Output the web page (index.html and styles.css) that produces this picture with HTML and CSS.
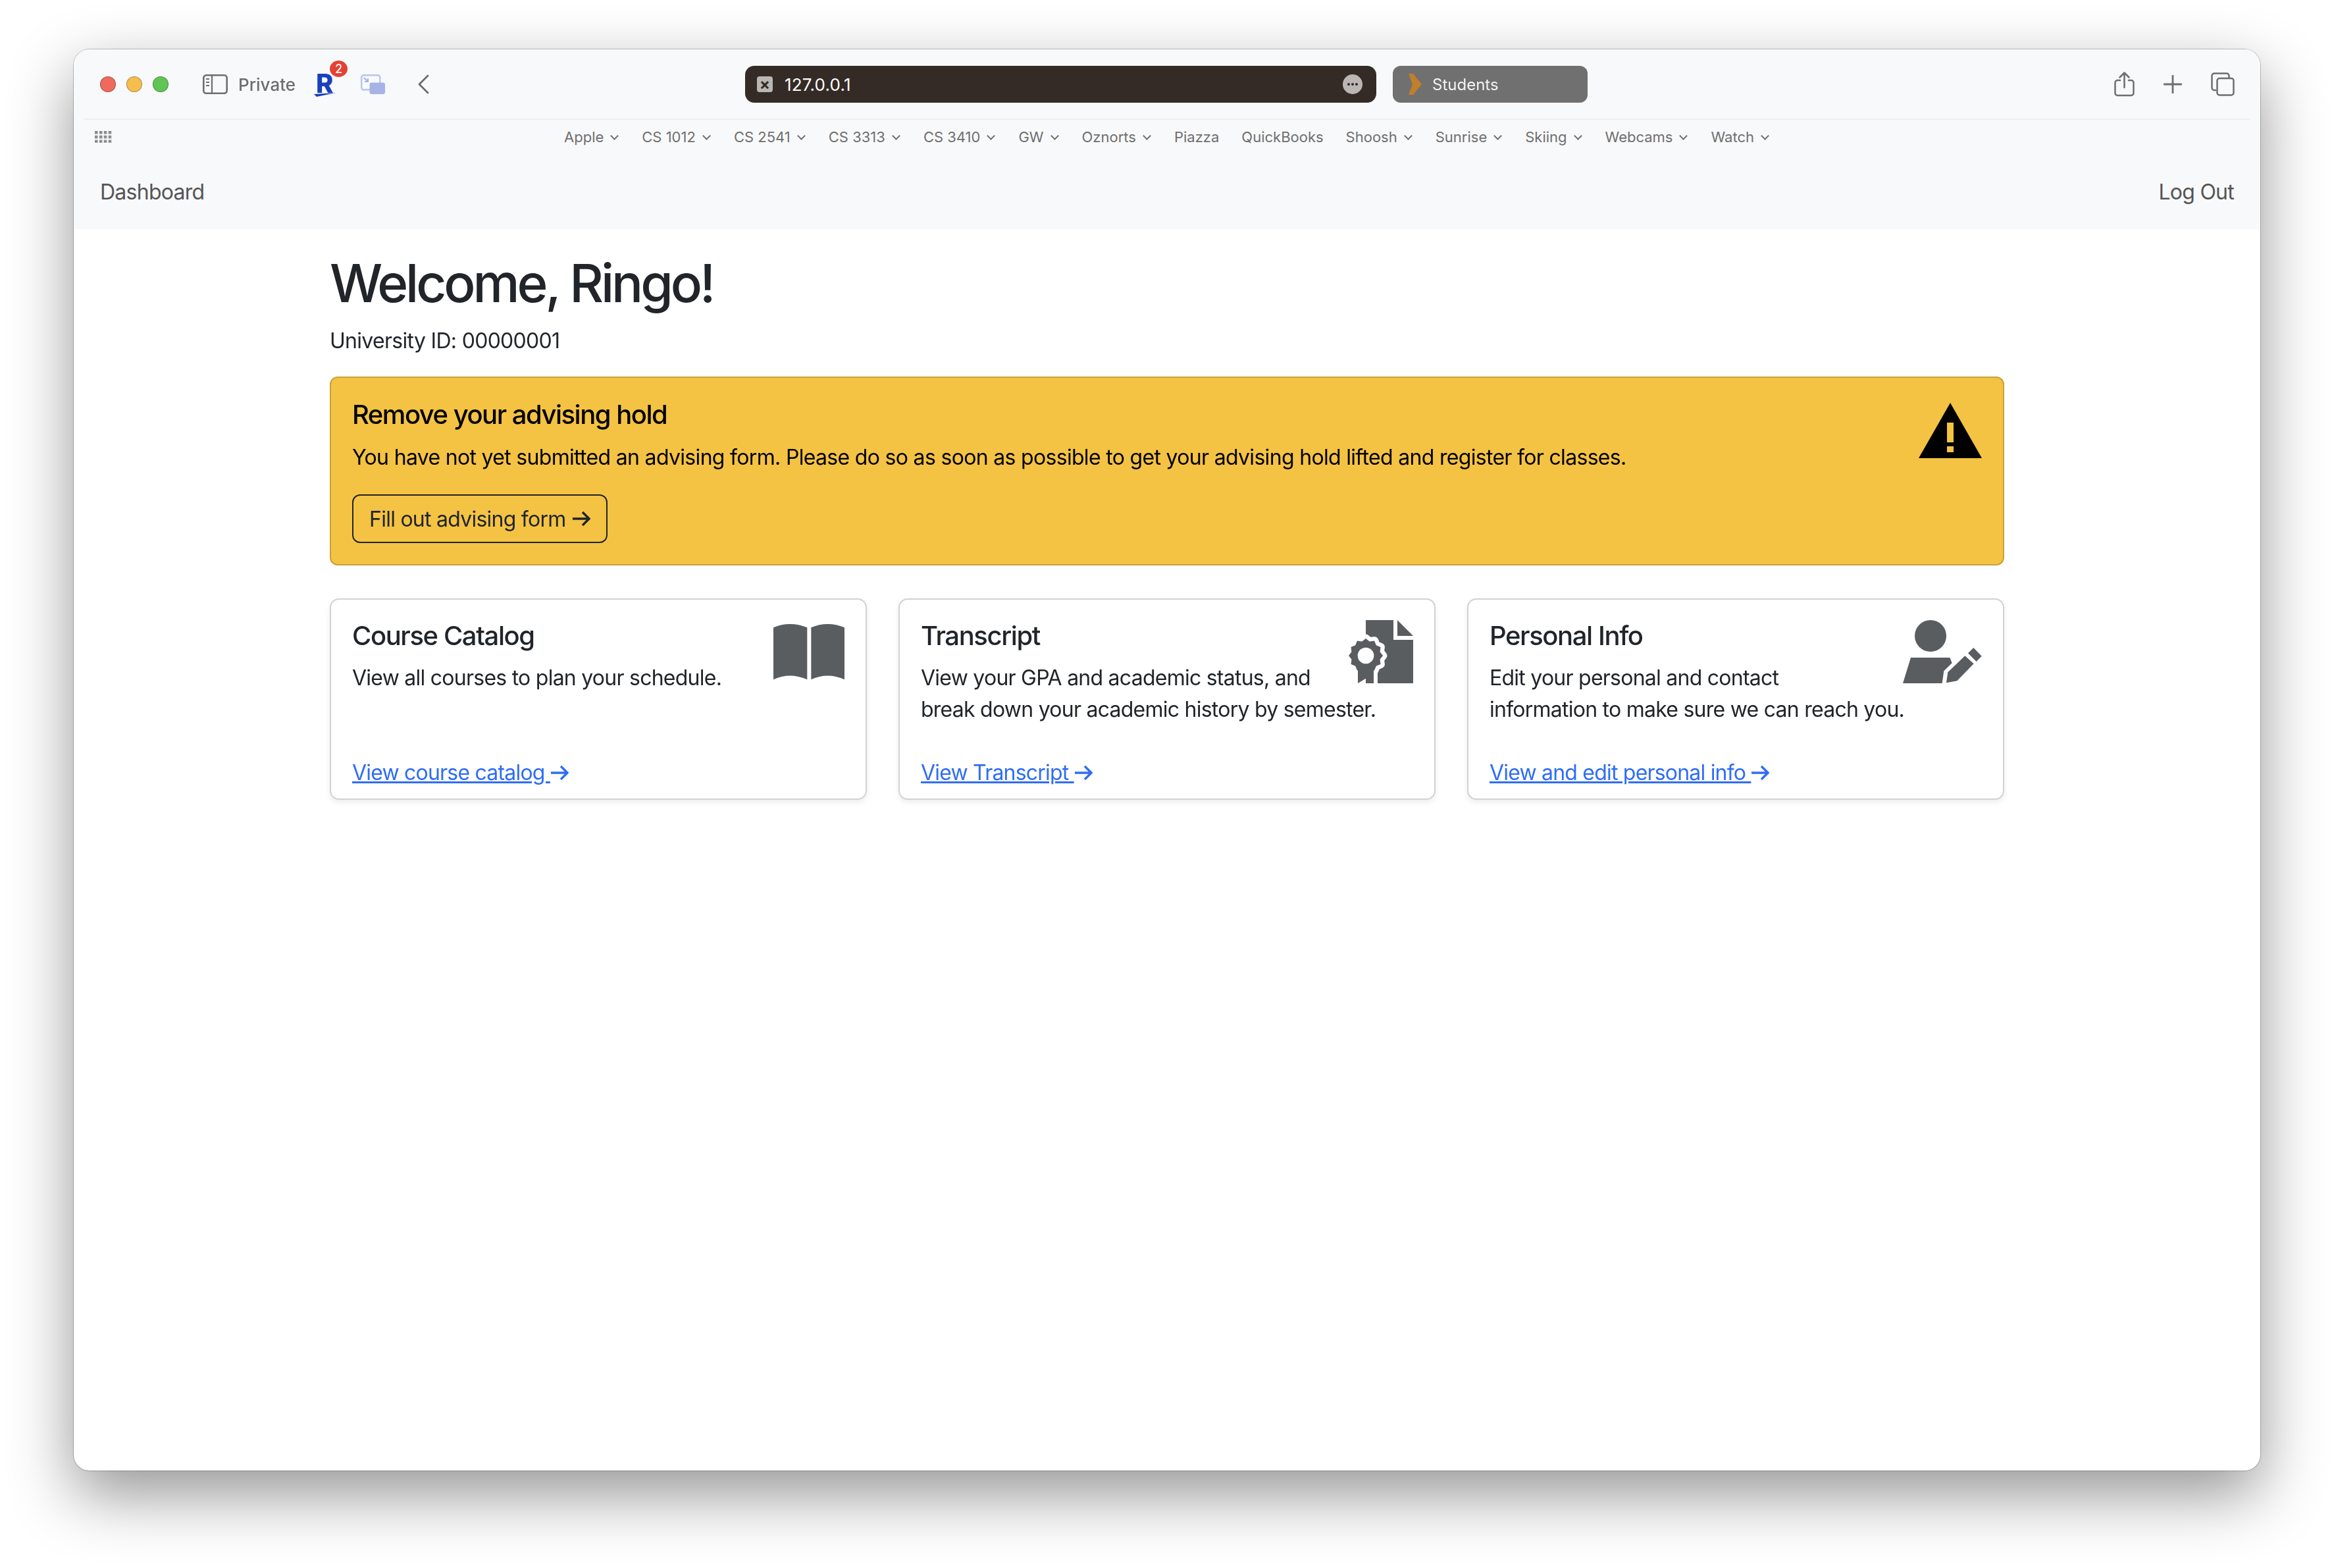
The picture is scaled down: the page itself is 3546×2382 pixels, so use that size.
FILE: index.html
```html
<!DOCTYPE html>
<html lang="en">
<head>
<meta charset="utf-8">
<title>Dashboard</title>
<link rel="stylesheet" href="styles.css">
</head>
<body>
<div class="window">
  <div class="toolbar">
    <div class="tb-left">
      <span class="light red"></span><span class="light yellow"></span><span class="light green"></span>
      <svg class="ic-sidebar" width="38" height="30" viewBox="0 0 38 30"><rect x="1.3" y="1.3" width="35.4" height="27.4" rx="4" fill="none" stroke="#6e6e6e" stroke-width="2.6"/><path d="M14 1v28M5 7h5M5 12h5M5 17h5" stroke="#6e6e6e" stroke-width="2.2" fill="none"/></svg>
      <span class="private">Private</span>
      <span class="rakuten">
        <span class="rakuten-r">R</span>
        <svg class="rakuten-swoosh" width="33" height="6" viewBox="0 0 33 6"><path d="M0 2 33 0 4 6z" fill="#1a3fbf"/></svg>
        <span class="badge">2</span>
      </span>
      <svg class="ic-pip" width="37" height="30" viewBox="0 0 37 30"><rect x="1.2" y="1.2" width="28" height="22" rx="3" fill="none" stroke="#b9c5ec" stroke-width="2.4"/><rect x="13.5" y="12.5" width="23.5" height="17.5" rx="3" fill="#a5b3e6"/><path d="M5 5l6 6M11 6v5H6" stroke="#a5b3e6" stroke-width="2" fill="none"/></svg>
      <svg class="ic-back" width="18" height="30" viewBox="0 0 18 30"><path d="M16 2 3 15l13 13" fill="none" stroke="#6b6b6b" stroke-width="2.8" stroke-linecap="round" stroke-linejoin="round"/></svg>
    </div>
    <div class="urlbar">
      <span class="favicon">×</span>
      <span class="url">127.0.0.1</span>
      <span class="more"><i></i><i></i><i></i></span>
    </div>
    <div class="tab">
      <svg width="20" height="32" viewBox="0 0 20 32"><path d="M0 0h7l13 16L7 32H0l6-16z" fill="#c17f2c"/></svg>
      <span>Students</span>
    </div>
    <div class="tb-right">
      <svg width="31" height="38" viewBox="0 0 31 38"><path d="M9 13H5a3.500 3.500 0 0 0-3.500 3.500v16A3.500 3.500 0 0 0 5 36h21a3.500 3.500 0 0 0 3.500-3.500v-16A3.500 3.500 0 0 0 26 13h-4M15.500 24V2M8.500 8.500l7-7 7 7" fill="none" stroke="#6e6e6e" stroke-width="2.500" stroke-linecap="round" stroke-linejoin="round"/></svg>
      <svg width="28" height="28" viewBox="0 0 28 28"><path d="M1 14h26M14 1v26" fill="none" stroke="#6e6e6e" stroke-width="2.800" stroke-linecap="round"/></svg>
      <svg width="36" height="36" viewBox="0 0 36 36"><path d="M8 27H5a3.500 3.500 0 0 1-3.500-3.500V5A3.500 3.500 0 0 1 5 1.500h19A3.500 3.500 0 0 1 27.500 5v3" fill="none" stroke="#6e6e6e" stroke-width="2.500"/><rect x="9.500" y="9" width="25" height="25.500" rx="3.500" fill="none" stroke="#6e6e6e" stroke-width="2.500"/></svg>
    </div>
  </div>

  <div class="bookmarks">
    <svg class="ic-grid" width="26" height="18" viewBox="0 0 26 18"><defs><pattern id="dots" width="6.900" height="6.800" patternUnits="userSpaceOnUse"><rect width="4.500" height="4.500" fill="#8a8a8a"/></pattern></defs><rect width="26" height="18" fill="url(#dots)"/></svg>
    <div class="bm-list">
      <span class="bm">Apple<i class="chev"></i></span>
      <span class="bm">CS 1012<i class="chev"></i></span>
      <span class="bm">CS 2541<i class="chev"></i></span>
      <span class="bm">CS 3313<i class="chev"></i></span>
      <span class="bm">CS 3410<i class="chev"></i></span>
      <span class="bm">GW<i class="chev"></i></span>
      <span class="bm">Oznorts<i class="chev"></i></span>
      <span class="bm">Piazza</span>
      <span class="bm">QuickBooks</span>
      <span class="bm">Shoosh<i class="chev"></i></span>
      <span class="bm">Sunrise<i class="chev"></i></span>
      <span class="bm">Skiing<i class="chev"></i></span>
      <span class="bm">Webcams<i class="chev"></i></span>
      <span class="bm">Watch<i class="chev"></i></span>
    </div>
  </div>

  <nav class="navbar">
    <a class="nav-link">Dashboard</a>
    <a class="nav-link">Log Out</a>
  </nav>

  <main class="main">
    <h1 class="welcome">Welcome, Ringo!</h1>
    <p class="uid">University ID: 00000001</p>

    <section class="alert">
      <svg class="ic-warn" width="96" height="84" viewBox="0 0 96 84"><path fill-rule="evenodd" d="M48 0 96 84H0zM43 30v30h10V30zM43 66v9h10v-9z" fill="#000"/></svg>
      <h2 class="alert-title">Remove your advising hold</h2>
      <p class="alert-text">You have not yet submitted an advising form. Please do so as soon as possible to get your advising hold lifted and register for classes.</p>
      <a class="btn">Fill out advising form
        <svg width="28" height="24" viewBox="0 0 28 24"><path d="M1 12h25M16 2l10 10-10 10" fill="none" stroke="#212529" stroke-width="3.400"/></svg>
      </a>
    </section>

    <div class="cards">
      <article class="card">
        <svg class="card-icon" width="108" height="96" viewBox="165 126 324 288"><path d="M165 160Q240 128 319 160V397Q240 362 165 397zM337 160Q412 128 490 160V397Q412 362 337 397z" fill="#5a5d60"/></svg>
        <h3 class="card-title">Course Catalog</h3>
        <p class="card-text">View all courses to plan your schedule.</p>
        <a class="card-link"><span class="u">View course catalog </span><svg width="28" height="24" viewBox="0 0 28 24"><path d="M1 12h25M16 2l10 10-10 10" fill="none" stroke="#2f6df6" stroke-width="3.400"/></svg></a>
      </article>
      <article class="card">
        <svg class="card-icon" width="98" height="96" viewBox="87 126 294 288"><path d="M165 126H291V216H381V414H165z" fill="#5a5d60"/><path d="M309 126 381 198H309z" fill="#5a5d60"/><rect x="201" y="330" width="18" height="84" fill="#fff"/><path d="M243 288 229.700 305.400 232.500 327 212.400 335.400 204 355.500 182.400 352.700 165 366 147.600 352.700 126 355.500 117.600 335.400 97.500 327 100.300 305.400 87 288 100.300 270.600 97.500 249 117.600 240.600 126 220.500 147.600 223.300 165 210 182.400 223.300 204 220.500 212.400 240.600 232.500 249 229.700 270.600z" fill="#5a5d60" stroke="#fff" stroke-width="38" paint-order="stroke" stroke-linejoin="round"/><path d="M129 340H201V414L165 392 129 414z" fill="#5a5d60"/><circle cx="165" cy="288" r="37" fill="#fff"/></svg>
        <h3 class="card-title">Transcript</h3>
        <p class="card-text">View your GPA and academic status, and break down your academic history by semester.</p>
        <a class="card-link"><span class="u">View Transcript </span><svg width="28" height="24" viewBox="0 0 28 24"><path d="M1 12h25M16 2l10 10-10 10" fill="none" stroke="#2f6df6" stroke-width="3.400"/></svg></a>
      </article>
      <article class="card">
        <svg class="card-icon" width="120" height="96" viewBox="93 126 360 288"><circle cx="219" cy="198" r="72" fill="#5a5d60"/><path d="M129 297H307L317 322 280 358 272 414H93z" fill="#5a5d60"/><path d="M376 289 416 325 340 403 291 412 298 364z" fill="#5a5d60"/><path d="M415 252 452 290 428 315 390 277z" fill="#5a5d60"/></svg>
        <h3 class="card-title">Personal Info</h3>
        <p class="card-text">Edit your personal and contact information to make sure we can reach you.</p>
        <a class="card-link"><span class="u">View and edit personal info </span><svg width="28" height="24" viewBox="0 0 28 24"><path d="M1 12h25M16 2l10 10-10 10" fill="none" stroke="#2f6df6" stroke-width="3.400"/></svg></a>
      </article>
    </div>
  </main>
</div>
</body>
</html>
```
FILE: styles.css
```css
* { box-sizing: border-box; }
html, body { margin: 0; padding: 0; background: #fff; }
body { font-family: Inter, "Liberation Sans", sans-serif; color: #212529; height: 2382px; overflow: hidden; padding: 75px 112px 0; }

.window {
  width: 3322px;
  height: 2159px;
  background: #fff;
  border-radius: 24px;
  overflow: hidden;
  box-shadow: 0 0 0 1px rgba(0,0,0,.22);
  display: flex;
  flex-direction: column;
  filter: drop-shadow(0 36px 48px rgba(0,0,0,.42));
}

.toolbar { height: 106px; background: #f8f9fa; display: flex; align-items: center; }
.tb-left { width: 1020px; display: flex; align-items: center; padding-left: 40px; }
.light { width: 24px; height: 24px; border-radius: 50%; margin-right: 16px; border: 1px solid rgba(0,0,0,.28); }
.red { background: #f0695f; }
.yellow { background: #f6bd4f; }
.green { background: #60c554; }
.ic-sidebar { margin-left: 36px; }
.private { margin-left: 16px; font-size: 26px; font-weight: 500; color: #6e6e6e; }
.rakuten { position: relative; width: 33px; height: 36px; margin-left: 28px; display: block; }
.rakuten-r { position: absolute; left: 3px; top: -7px; font-family: Inter, sans-serif; font-weight: 800; font-size: 40px; color: #1a3fbf; line-height: 48px; }
.rakuten-swoosh { position: absolute; left: 0; top: 31px; }
.badge { position: absolute; left: 24px; top: -18px; width: 27px; height: 25px; border-radius: 50%; background: #e34234; color: #fff; font-size: 18px; font-weight: 500; display: flex; align-items: center; justify-content: center; }
.ic-pip { margin-left: 38px; }
.ic-back { margin-left: 49px; }

.urlbar { width: 959px; height: 56px; background: #352b26; border-radius: 14px; display: flex; align-items: center; padding: 0 21px 0 18px; }
.favicon { width: 24px; height: 24px; border-radius: 4px; background: #b9b6b3; color: #352b26; font-size: 24px; font-weight: 700; line-height: 23px; text-align: center; }
.url { margin-left: 18px; color: #fff; font-size: 26px; letter-spacing: .2px; flex: 1; }
.more { width: 30px; height: 30px; border-radius: 50%; background: #b9b6b3; display: flex; align-items: center; justify-content: center; gap: 2px; }
.more i { width: 4px; height: 4px; border-radius: 50%; background: #352b26; }

.tab { margin-left: 25px; width: 296px; height: 56px; background: #707070; border-radius: 12px; display: flex; align-items: center; padding-left: 24px; color: #f3f3f3; font-size: 24px; }
.tab span { margin-left: 16px; }

.tb-right { margin-left: auto; display: flex; align-items: center; gap: 44px; padding-right: 39px; }

.bookmarks { height: 52px; padding-top: 2px; background: #f8f9fa; position: relative; display: flex; align-items: center; justify-content: center; }
.bookmarks::before { content: ""; position: absolute; left: 16px; right: 16px; top: -1px; height: 2px; background: #eceded; }
.ic-grid { position: absolute; left: 32px; top: 18px; }
.bm-list { display: flex; align-items: center; gap: 34px; }
.bm { font-size: 22px; color: #6f6f6f; display: flex; align-items: center; white-space: nowrap; }
.chev { width: 9px; height: 9px; border-right: 2px solid #6f6f6f; border-bottom: 2px solid #6f6f6f; transform: rotate(45deg); margin: -4px 3px 0 12px; }

.navbar { height: 115px; padding: 3px 40px 0; background: #f8f9fa; display: flex; align-items: center; justify-content: space-between; }
.nav-link { font-size: 32px; color: #555; line-height: 48px; letter-spacing: -.75px; }

.main { width: 2544px; margin-left: 389px; padding-top: 34px; }
.welcome { margin: 0 0 16px; font-size: 80px; line-height: 96px; font-weight: 500; color: #212529; letter-spacing: -4.05px; }
.uid { margin: 0 0 30px; font-size: 32px; line-height: 48px; letter-spacing: -.7px; }

.alert { background: #f4c343; border: 2px solid #c9a135; border-radius: 12px; padding: 32px; height: 287px; color: #000; }
.ic-warn { float: right; margin: 6px 0 0 0; }
.alert-title { margin: 0 0 17px; font-size: 40px; line-height: 48px; font-weight: 500; letter-spacing: -1.5px; }
.alert-text { margin: 0 0 32px; font-size: 32px; line-height: 48px; letter-spacing: -.68px; }
.btn { display: inline-flex; align-items: center; gap: 9px; height: 74px; padding: 0 24px; border: 2px solid #212529; border-radius: 12px; font-size: 32px; color: #212529; letter-spacing: -.75px; }

.cards { display: grid; grid-template-columns: repeat(3, 816px); gap: 48px; margin-top: 50px; }
.card { background: #fff; border: 2px solid #d2d2d2; border-radius: 14px; padding: 31px 32px 15px; box-shadow: 0 4px 8px rgba(0,0,0,.075); height: 306px; position: relative; }
.card-icon { float: right; margin-left: 24px; }
.card-title { margin: 0 0 16px; font-size: 40px; line-height: 48px; font-weight: 500; letter-spacing: -1.4px; }
.card-text { margin: 0; font-size: 32px; line-height: 48px; letter-spacing: -.75px; }
.card-link { position: absolute; left: 32px; bottom: 15px; display: flex; align-items: center; font-size: 32px; line-height: 48px; color: #2f6df6; letter-spacing: -.8px; }
.u { text-decoration: underline; white-space: pre; }
```
